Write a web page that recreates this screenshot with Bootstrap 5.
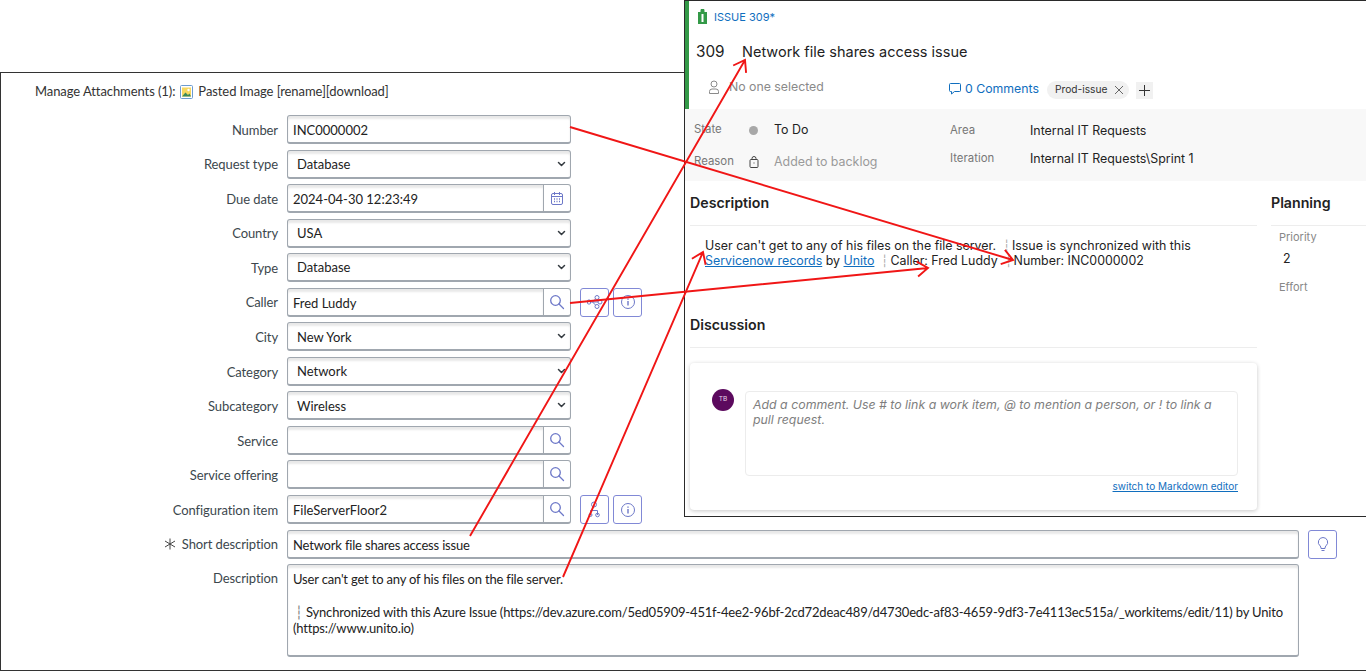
<!DOCTYPE html>
<html lang="en">
<head>
<meta charset="utf-8">
<title>ServiceNow and Azure DevOps</title>
<link rel="stylesheet" href="https://cdn.jsdelivr.net/npm/bootstrap@5.3.0/dist/css/bootstrap.min.css">
<style>
html,body{margin:0;height:671px;overflow:hidden;background:#fff}
.canvas{position:relative;width:1366px;height:671px;overflow:hidden}
.snow-win{position:absolute;left:0;top:72px;width:1367px;height:599px;border:1px solid #333;background:#fff;font-family:Lato,sans-serif;font-size:13px;color:#2e3a40;padding:0}
.attach{height:36px;padding:2px 0 0 34px;color:#333;letter-spacing:-.08px}
.attach svg{margin:0 5px 0 5px}
.snow-form{margin-top:6px}
.f-row{display:flex;align-items:center;height:29px;margin-bottom:5.55px}
.f-label{width:277px;text-align:right;color:#3c474d;margin-right:9px;flex:none;padding-top:2px;letter-spacing:-.09px}
.f-label svg{margin-right:6px;vertical-align:-1px}
.f-field{width:283.5px;flex:none}
.f-wide{width:1011.5px;flex:none}
.snow-form .form-control,.snow-form .form-select{height:29px;min-height:0;font-size:13px;font-family:Lato,sans-serif;color:#222;border:1px solid #a0a7af;border-bottom-width:2px;border-radius:3px;box-shadow:inset 0 3px 2px rgba(0,0,0,.09);padding:2px 5px 0;background-color:#fff}
.snow-form .form-select{padding-left:9px;background-size:9px 8px;background-position:right 4px center;background-image:url("data:image/svg+xml,%3csvg xmlns='http://www.w3.org/2000/svg' viewBox='0 0 16 16'%3e%3cpath fill='none' stroke='%23343a40' stroke-linecap='round' stroke-linejoin='round' stroke-width='3' d='m2 5 6 6 6-6'/%3e%3c/svg%3e")}
.snow-form .tight{letter-spacing:-.18px}
.snow-form .desc-box{height:93px;line-height:16.3px;padding:6px 5px;overflow:hidden;white-space:pre}
.box-dash{color:#777;margin-left:2px;display:inline-block}
.sq-btn{width:28px;height:29px;padding:0;display:inline-flex;align-items:center;justify-content:center;background:#fff;border:1px solid #a0a7af;border-bottom-width:2px;border-radius:0 3px 3px 0}
.side-btn{width:29px;height:29px;padding:0;display:inline-flex;align-items:center;justify-content:center;background:#fff;border:1px solid #8189d6;border-radius:3px;margin-left:4px}
.side-first{margin-left:9.5px}
.desc-row{height:93px;align-items:flex-start;margin:0}
.desc-row .f-label{padding-top:5px}
.ado-win{position:absolute;left:684px;top:0;width:690px;height:517px;background:#fff;border:1px solid #2a2a2a;border-right:0;font-family:Inter,sans-serif;color:#222}
.ado-head{height:108px;border-left:4px solid #339947;position:relative}
.tag-line{height:33px;padding:8px 0 0 8px;font-size:11px;color:#106ebe}
.tag-line svg{margin-right:6px;vertical-align:-3px}
.title-line{height:35px;padding-left:7px;font-size:14.5px;line-height:35px;color:#222}
.title-line .num{width:46px;display:inline-block;font-size:15.3px}
.meta-line{font-size:12.3px;height:36px}
.assignee{width:260px;padding-left:17px;color:#8a8a8a}
.assignee svg{margin-right:7px}
.comments{color:#106ebe;margin-right:8px;white-space:nowrap;padding-top:4px}
.comments svg{margin-right:4px;vertical-align:-2px}
.chip-tag{height:18px;background:#f1f1f1;border-radius:9px;padding:0 5px 0 8px;font-size:10.2px;color:#333;width:82px;margin-top:6px}
.chip-plus{width:17px;height:17px;background:#f1f1f1;margin-left:7px;margin-top:6px}
.fields-band{height:72px;background:#f8f8f8;font-size:12.4px;display:flex}
.band-left{width:265px;flex:none;padding-top:5px}
.band-right{padding-top:8px;flex:1}
.band-left .band-grid{display:grid;grid-template-columns:55px 25px 1fr;padding-left:9px;align-items:center;height:32px}
.band-right .band-grid{display:grid;grid-template-columns:80px 1fr;align-items:center;height:28px}
.band-label{color:#777;font-size:11.4px}
.band-muted{color:#9a9a9a}
.state-dot{width:9px;height:9px;border-radius:50%;background:#a8a8a8;display:block}
.ado-main{display:flex;padding-left:5px;margin-top:1px}
.ado-col{width:567px;flex:none}
.plan-col{margin-left:14px;flex:1}
.sect-title{font-size:14.2px;font-weight:600;line-height:20px;padding-top:11px;height:44px;border-bottom:1px solid #ededed;color:#222}
.desc-text{padding:12px 10px 0 15px;font-size:12.4px;line-height:15px;height:78px;color:#222}
.desc-text a,.md-link{color:#106ebe}
.dash{color:#aaa;margin-right:2px}
.plan-label{padding:3px 0 0 8px;font-size:11px;color:#888;height:23px}
.plan-val{padding:1px 0 0 12px;font-size:12.4px;height:27px}
.disc-card{height:147px;margin-top:15px;border:0;border-radius:4px;box-shadow:0 1px 4px rgba(0,0,0,.22);padding:26px 19px 0 22px}
.avatar-tb{width:22px;height:22px;border-radius:50%;background:#5c0a5e;color:#e8d8e8;font-size:6.5px;flex:none;margin-right:11px}
.comment-col{flex:1;padding-top:2px}
.comment-box{height:85px;border:1px solid #ececec;border-radius:4px;padding:5px 7px;font-style:italic;font-size:12.35px;line-height:15px;color:#7e7e7e}
.md-link{font-size:10px;text-align:right;text-decoration:underline;margin-top:3px}
.arrows{position:absolute;left:0;top:0;pointer-events:none}
</style>
</head>
<body>
<div class="canvas">

  <div class="snow-win">
    <div class="attach d-flex align-items-center">
      <span>Manage Attachments (1):</span>
      <svg width="13" height="14" viewBox="0 0 13 14"><rect x=".5" y=".5" width="12" height="13" rx="1" fill="#fff" stroke="#6b9bd1"/><rect x="2" y="2.5" width="9" height="9" fill="#f6d860"/><path d="M2 11.5l3.5-4 2.5 2.5 1.5-1.5 1.5 3z" fill="#3d8a5a"/><circle cx="8.5" cy="5" r="1.2" fill="#fff"/></svg>
      <span>Pasted Image [rename][download]</span>
    </div>
    <div class="snow-form">
      <div class="f-row"><div class="f-label">Number</div><div class="f-field"><input class="form-control" value="INC0000002" aria-label="Number"></div></div>
      <div class="f-row"><div class="f-label">Request type</div><div class="f-field"><select class="form-select" aria-label="Request type"><option>Database</option></select></div></div>
      <div class="f-row"><div class="f-label">Due date</div><div class="f-field"><div class="input-group flex-nowrap"><input class="form-control" value="2024-04-30 12:23:49" aria-label="Due date"><button type="button" class="sq-btn" aria-label="Calendar"><svg width="14" height="15" viewBox="0 0 14 15" fill="none" stroke="#6d78c8"><rect x="1.5" y="2.5" width="11" height="11" rx="1.5"/><path d="M1.5 5.5h11M4.5 1v3M9.5 1v3"/><path d="M4 8h1M6.5 8h1M9 8h1M4 10.500h1M6.500 10.500h1M9 10.500h1" stroke-width="1.300"/></svg></button></div></div></div>
      <div class="f-row"><div class="f-label">Country</div><div class="f-field"><select class="form-select" aria-label="Country"><option>USA</option></select></div></div>
      <div class="f-row"><div class="f-label">Type</div><div class="f-field"><select class="form-select" aria-label="Type"><option>Database</option></select></div></div>
      <div class="f-row"><div class="f-label">Caller</div><div class="f-field"><div class="input-group flex-nowrap"><input class="form-control" value="Fred Luddy" aria-label="Caller"><button type="button" class="sq-btn" aria-label="Search"><svg width="16" height="16" viewBox="0 0 16 16" fill="none" stroke="#6d78c8" stroke-width="1.300"><circle cx="6.500" cy="6.500" r="4.800"/><path d="M10 10l4.500 4.500" stroke-linecap="round"/></svg></button></div></div>
        <button type="button" class="side-btn side-first" aria-label="Related"><svg width="18" height="16" viewBox="0 0 18 16" fill="none" stroke="#6d78c8"><rect x="1.500" y="6" width="3" height="4" rx="1"/><circle cx="11" cy="3.500" r="2"/><circle cx="11" cy="12.500" r="2"/><circle cx="14" cy="8" r="2"/><path d="M4.500 8h7.500M9.500 5l-3 3 3 3"/></svg></button>
        <button type="button" class="side-btn" aria-label="Info"><svg width="16" height="16" viewBox="0 0 16 16" fill="none" stroke="#6d78c8"><circle cx="8" cy="8" r="6.500"/><path d="M8 7v4.500M8 4.500v1.200" stroke-width="1.400"/></svg></button>
      </div>
      <div class="f-row"><div class="f-label">City</div><div class="f-field"><select class="form-select" aria-label="City"><option>New York</option></select></div></div>
      <div class="f-row"><div class="f-label">Category</div><div class="f-field"><select class="form-select" aria-label="Category"><option>Network</option></select></div></div>
      <div class="f-row"><div class="f-label">Subcategory</div><div class="f-field"><select class="form-select" aria-label="Subcategory"><option>Wireless</option></select></div></div>
      <div class="f-row"><div class="f-label">Service</div><div class="f-field"><div class="input-group flex-nowrap"><input class="form-control" aria-label="Service"><button type="button" class="sq-btn" aria-label="Search"><svg width="16" height="16" viewBox="0 0 16 16" fill="none" stroke="#6d78c8" stroke-width="1.300"><circle cx="6.500" cy="6.500" r="4.800"/><path d="M10 10l4.500 4.500" stroke-linecap="round"/></svg></button></div></div></div>
      <div class="f-row"><div class="f-label">Service offering</div><div class="f-field"><div class="input-group flex-nowrap"><input class="form-control" aria-label="Service offering"><button type="button" class="sq-btn" aria-label="Search"><svg width="16" height="16" viewBox="0 0 16 16" fill="none" stroke="#6d78c8" stroke-width="1.300"><circle cx="6.500" cy="6.500" r="4.800"/><path d="M10 10l4.500 4.500" stroke-linecap="round"/></svg></button></div></div></div>
      <div class="f-row"><div class="f-label">Configuration item</div><div class="f-field"><div class="input-group flex-nowrap"><input class="form-control" value="FileServerFloor2" aria-label="Configuration item"><button type="button" class="sq-btn" aria-label="Search"><svg width="16" height="16" viewBox="0 0 16 16" fill="none" stroke="#6d78c8" stroke-width="1.300"><circle cx="6.500" cy="6.500" r="4.800"/><path d="M10 10l4.500 4.500" stroke-linecap="round"/></svg></button></div></div>
        <button type="button" class="side-btn side-first" aria-label="Dependency"><svg width="16" height="17" viewBox="0 0 16 17" fill="none" stroke="#6d78c8"><circle cx="7" cy="3.500" r="2.500"/><path d="M3.500 14V9.500h7V14"/><circle cx="3.500" cy="14" r="1.500"/><circle cx="10.500" cy="14" r="1.800"/></svg></button>
        <button type="button" class="side-btn" aria-label="Info"><svg width="16" height="16" viewBox="0 0 16 16" fill="none" stroke="#6d78c8"><circle cx="8" cy="8" r="6.500"/><path d="M8 7v4.500M8 4.500v1.200" stroke-width="1.400"/></svg></button>
      </div>
      <div class="f-row"><div class="f-label"><svg width="12" height="12" viewBox="0 0 12 12" fill="none" stroke="#444" stroke-width="1"><path d="M6 .5v11M1 3l10 6M11 3L1 9"/></svg>Short description</div><div class="f-wide"><input class="form-control tight" value="Network file shares access issue" aria-label="Short description"></div>
        <button type="button" class="side-btn side-first" aria-label="Suggestion"><svg width="14" height="17" viewBox="0 0 14 17" fill="none" stroke="#6d78c8"><path d="M7 1.500a4.700 4.700 0 0 0-3 8.300c.8.8 1 1.500 1 2.700h4c0-1.200.2-1.900 1-2.700a4.700 4.700 0 0 0-3-8.300z"/><path d="M5.500 14.500h3"/></svg></button>
      </div>
      <div class="f-row desc-row"><div class="f-label">Description</div><div class="f-wide"><div class="form-control tight desc-box"><span>User can't get to any of his files on the file server.</span><br><br><span class="box-dash">┆</span> <span>Synchronized with this Azure Issue (https://dev.azure.com/5ed05909-451f-4ee2-96bf-2cd72deac489/d4730edc-af83-4659-9df3-7e4113ec515a/_workitems/edit/11) by Unito</span><br><span>(https://www.unito.io)</span></div></div></div>
    </div>
  </div>

  <div class="ado-win">
    <div class="ado-head">
      <div class="tag-line"><svg width="11" height="15" viewBox="0 0 11 15"><path d="M1 3h2.500V1.500a2 2 0 0 1 4 0V3H10v12H1z" fill="#339947"/><rect x="4.500" y="5" width="2" height="8" fill="#fff"/></svg>ISSUE 309*</div>
      <div class="title-line"><span class="num">309</span>Network file shares access issue</div>
      <div class="meta-line d-flex align-items-center">
        <div class="assignee d-flex align-items-center"><svg width="16" height="16" viewBox="0 0 16 16" fill="none" stroke="#8a8a8a"><circle cx="8" cy="5" r="3"/><path d="M3.500 14.500v-2a2.500 2.500 0 0 1 2.500-2.500h4a2.500 2.500 0 0 1 2.500 2.500v2z"/></svg>No one selected</div>
        <div class="comments"><svg width="12" height="13" viewBox="0 0 12 13" fill="none" stroke="#106ebe"><path d="M1.500 1.500h9a1 1 0 0 1 1 1v6a1 1 0 0 1-1 1H5.500l-3 2.500V9.500h-1a1 1 0 0 1-1-1v-6a1 1 0 0 1 1-1z"/></svg>0 Comments</div>
        <div class="chip-tag d-flex align-items-center justify-content-between"><span>Prod-issue</span><svg width="10" height="10" viewBox="0 0 10 10" stroke="#666" fill="none"><path d="M1 1l8 8M9 1L1 9"/></svg></div>
        <div class="chip-plus d-flex align-items-center justify-content-center"><svg width="11" height="11" viewBox="0 0 11 11" stroke="#333" fill="none"><path d="M5.500 0v11M0 5.500h11"/></svg></div>
      </div>
    </div>
    <div class="fields-band">
      <div class="band-left">
        <div class="band-grid"><span class="band-label">State</span><span class="state-dot"></span><span>To Do</span></div>
        <div class="band-grid"><span class="band-label">Reason</span><svg width="10" height="12" viewBox="0 0 10 12" fill="none" stroke="#444"><rect x="1" y="3.500" width="8" height="8" rx="1"/><path d="M3 3.500V2.500a2 2 0 0 1 4 0v1M4.500 7h1"/></svg><span class="band-muted">Added to backlog</span></div>
      </div>
      <div class="band-right">
        <div class="band-grid"><span class="band-label">Area</span><span>Internal IT Requests</span></div>
        <div class="band-grid"><span class="band-label">Iteration</span><span>Internal IT Requests\Sprint 1</span></div>
      </div>
    </div>
    <div class="ado-main">
      <div class="ado-col">
        <div class="sect-title">Description</div>
        <div class="desc-text">User can't get to any of his files on the file server. &nbsp;<span class="dash">┆</span>Issue is synchronized with this <a href="#">Servicenow records</a> by <a href="#">Unito</a> &nbsp;<span class="dash">┆</span>Caller: Fred Luddy &nbsp;<span class="dash">┆</span>Number: INC0000002</div>
        <div class="sect-title">Discussion</div>
        <div class="card flex-row disc-card">
          <div class="avatar-tb d-flex align-items-center justify-content-center">TB</div>
          <div class="comment-col">
            <div class="comment-box">Add a comment. Use # to link a work item, @ to mention a person, or ! to link a pull request.</div>
            <div class="md-link">switch to Markdown editor</div>
          </div>
        </div>
      </div>
      <div class="plan-col">
        <div class="sect-title">Planning</div>
        <div class="plan-label">Priority</div>
        <div class="plan-val">2</div>
        <div class="plan-label">Effort</div>
      </div>
    </div>
  </div>

  <svg class="arrows" width="1366" height="671" viewBox="0 0 1366 671" fill="none" stroke="#f01616" stroke-width="1.900" aria-hidden="true">
    <path d="M570 127L1013 260M1004.900 249.800L1013 260L1000.700 264.100"/>
    <path d="M570 303L928 268M916.700 261.600L928 268L918.100 276.500"/>
    <path d="M470 536L745 60M733.200 65.500L745 60L746.100 72.900"/>
    <path d="M563 577L703 252M691.900 258.800L703 252L705.600 264.700"/>
  </svg>
</div>
<script src="https://cdn.jsdelivr.net/npm/bootstrap@5.3.0/dist/js/bootstrap.bundle.min.js"></script>
</body>
</html>
